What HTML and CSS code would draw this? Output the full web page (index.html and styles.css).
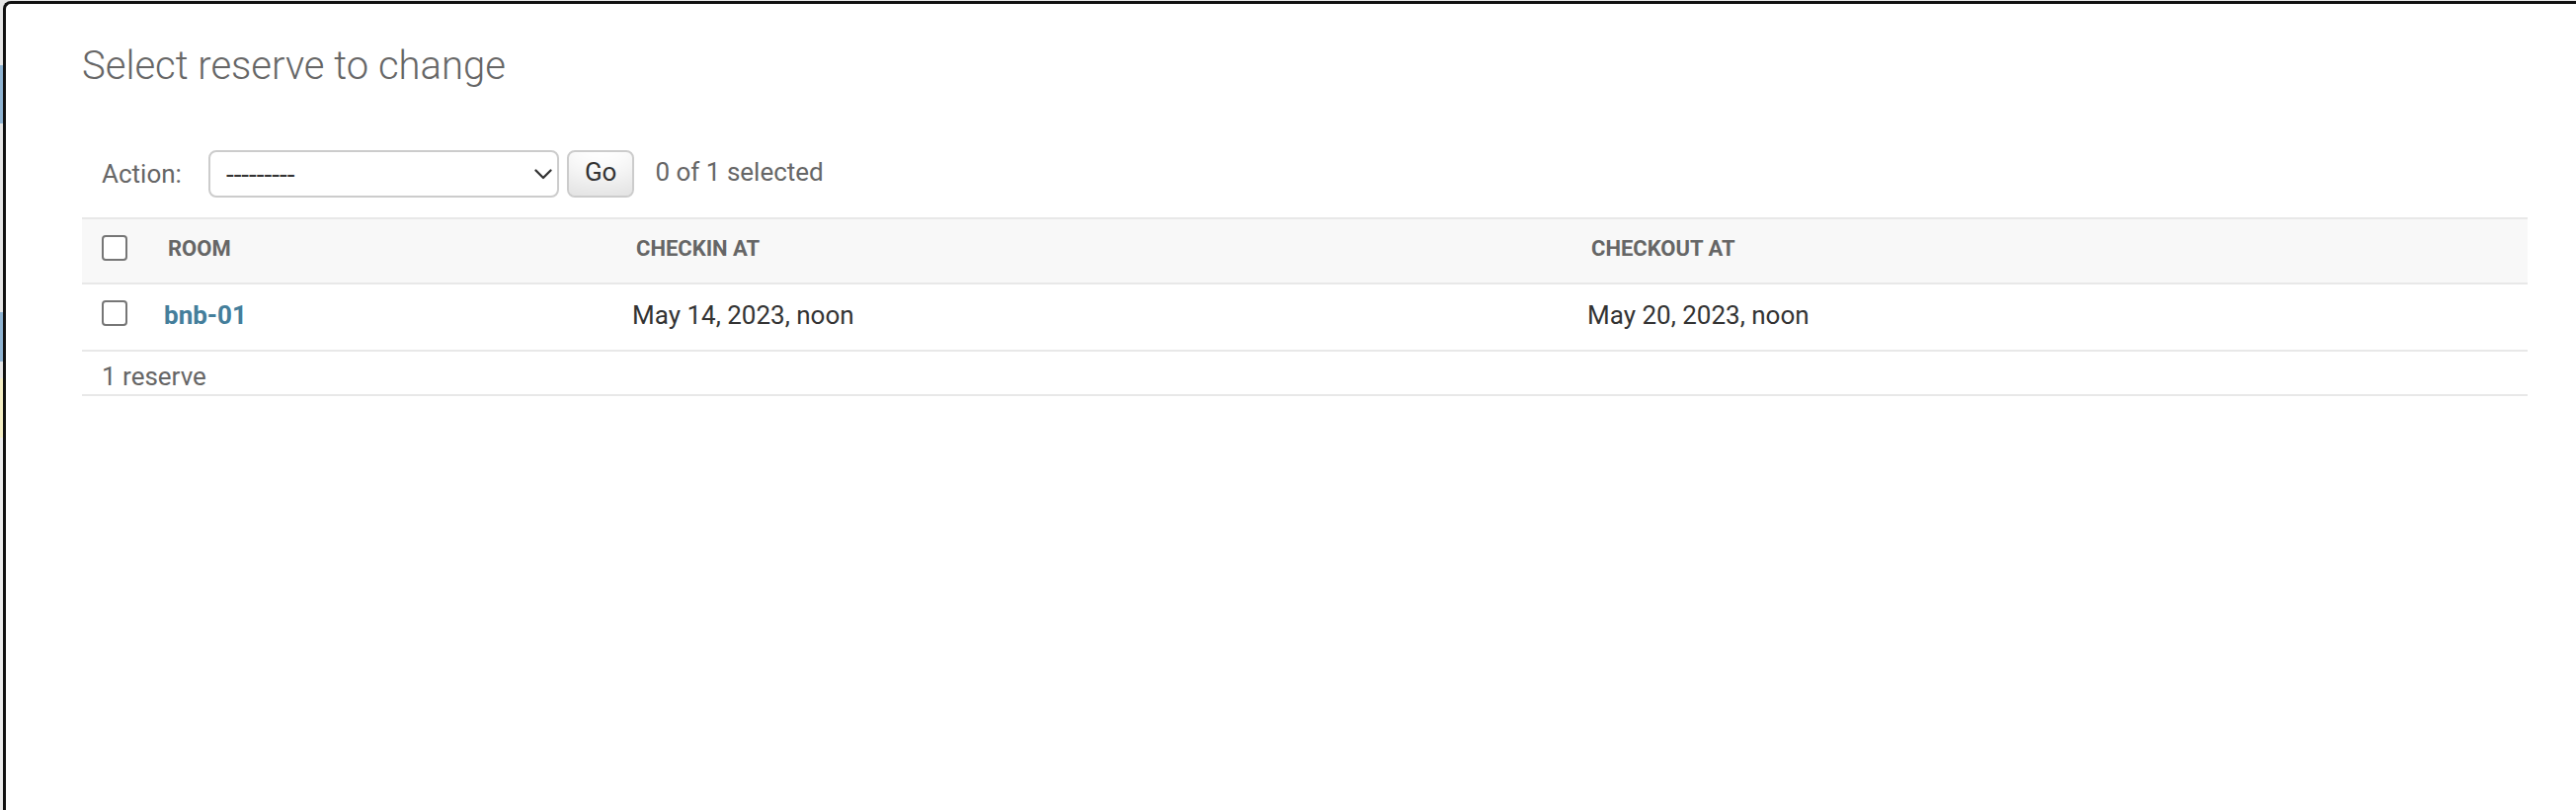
FILE: index.html
```html
<!DOCTYPE html>
<html lang="en">
<head>
<meta charset="utf-8">
<title>Select reserve to change</title>
<link rel="stylesheet" href="styles.css">
</head>
<body>
<div class="window">
  <main class="content">
    <h1 class="title">Select reserve to change</h1>
    <form class="changelist">
      <div class="actions">
        <label class="action-label" for="action">Action:</label>
        <span class="select-wrap">
          <select id="action" class="action-select"><option>---------</option></select>
          <svg class="chevron" width="18" height="11" viewBox="0 0 18 11" aria-hidden="true"><polyline points="1.5,1.5 9,9 16.5,1.5" fill="none" stroke="#333" stroke-width="2.3" stroke-linecap="round" stroke-linejoin="round"/></svg>
        </span>
        <button type="button" class="go-button">Go</button>
        <span class="action-counter">0 of 1 selected</span>
      </div>
      <table class="result-list">
        <colgroup>
          <col class="col-check"><col class="col-room"><col class="col-in"><col class="col-out">
        </colgroup>
        <thead>
          <tr>
            <th class="check-cell"><input type="checkbox" class="cb"></th>
            <th class="head">Room</th>
            <th class="head">Checkin at</th>
            <th class="head">Checkout at</th>
          </tr>
        </thead>
        <tbody>
          <tr>
            <td class="check-cell"><input type="checkbox" class="cb"></td>
            <th class="cell room"><a class="room-link" href="#">bnb-01</a></th>
            <td class="cell">May 14, 2023, noon</td>
            <td class="cell">May 20, 2023, noon</td>
          </tr>
        </tbody>
      </table>
      <p class="paginator">1 reserve</p>
    </form>
  </main>
</div>
</body>
</html>
```

FILE: styles.css
```css
html, body {
  margin: 0;
  padding: 0;
}

body {
  height: 820px;
  overflow: hidden;
  font-family: "Roboto", "Liberation Sans", sans-serif;
  color: #333;
  background: linear-gradient(to bottom,
    #e6e6e6 0, #e6e6e6 66px,
    #8fb3d1 66px, #8fb3d1 125px,
    #e6e6e6 125px, #e6e6e6 316px,
    #8fb3d1 316px, #8fb3d1 366px,
    #e6e6e6 366px, #e6e6e6 383px,
    #f4eec4 383px, #f4eec4 443px,
    #ececec 443px);
}

.window {
  margin: 1px 0 0 3px;
  height: 819px;
  box-sizing: border-box;
  background: #fff;
  border-top: 3px solid #111;
  border-left: 3px solid #111;
  border-top-left-radius: 8px;
}

.content {
  padding: 39px 49px 40px 77px;
}

.title {
  margin: 0 0 41px 0;
  font-size: 40px;
  line-height: 48px;
  font-weight: 300;
  color: #666;
}

.changelist {
  margin: 0;
}

.actions {
  display: flex;
  align-items: center;
  padding: 20px;
  color: #666;
  font-size: 26px;
}

.action-label {
  line-height: normal;
}

.select-wrap {
  position: relative;
  display: block;
  margin-left: 27px;
}

.action-select {
  display: block;
  width: 355px;
  height: 48px;
  box-sizing: border-box;
  margin: 0;
  padding: 0 0 0 16px;
  border: 2px solid #ccc;
  border-radius: 8px;
  background: #fff;
  color: #333;
  font-family: "Roboto", "Liberation Sans", sans-serif;
  font-size: 28px;
  appearance: none;
  -webkit-appearance: none;
  outline: none;
}

.chevron {
  position: absolute;
  left: 330px;
  top: 19px;
  pointer-events: none;
}

.go-button {
  margin-left: 8px;
  height: 48px;
  box-sizing: border-box;
  padding: 0 16px 4px 16px;
  border: 2px solid #ccc;
  border-radius: 8px;
  background: #fff;
  box-shadow: 0 -30px 40px -20px rgba(0, 0, 0, 0.15) inset;
  color: #333;
  font-family: "Roboto", "Liberation Sans", sans-serif;
  font-size: 26px;
  line-height: 1;
}

.action-counter {
  margin-left: 21px;
  padding-bottom: 4px;
}

.result-list {
  width: 100%;
  table-layout: fixed;
  border-collapse: separate;
  border-spacing: 0;
}

.col-check { width: 67px; }
.col-room { width: 474px; }
.col-in { width: 967px; }
.col-out { width: 968px; }

thead th {
  background: #f8f8f8;
  border-top: 2px solid #e8e8e8;
  border-bottom: 2px solid #e8e8e8;
  vertical-align: top;
  text-align: left;
}

.head {
  padding: 0 20px 4px 20px;
  line-height: 60px;
  font-size: 22px;
  font-weight: 700;
  color: #666;
  text-transform: uppercase;
  white-space: nowrap;
}

thead .check-cell {
  padding: 16px 0 22px 20px;
}

tbody td, tbody th {
  border-bottom: 2px solid #e8e8e8;
  vertical-align: top;
  text-align: left;
}

.cell {
  padding: 15px 16px 19px 16px;
  line-height: 32px;
  font-size: 26px;
  color: #333;
  white-space: nowrap;
}

tbody .check-cell {
  padding: 16px 0 24px 20px;
}

.room {
  font-weight: 700;
}

.room-link {
  color: #447e9b;
  text-decoration: none;
}

.cb {
  display: block;
  width: 26px;
  height: 26px;
  box-sizing: border-box;
  margin: 0;
  border: 2px solid #767676;
  border-radius: 4px;
  background: #fff;
  appearance: none;
  -webkit-appearance: none;
}

.paginator {
  margin: 0;
  padding: 10px 0 3px 20px;
  line-height: 30px;
  font-size: 26px;
  color: #666;
  border-bottom: 2px solid #e8e8e8;
}
```
